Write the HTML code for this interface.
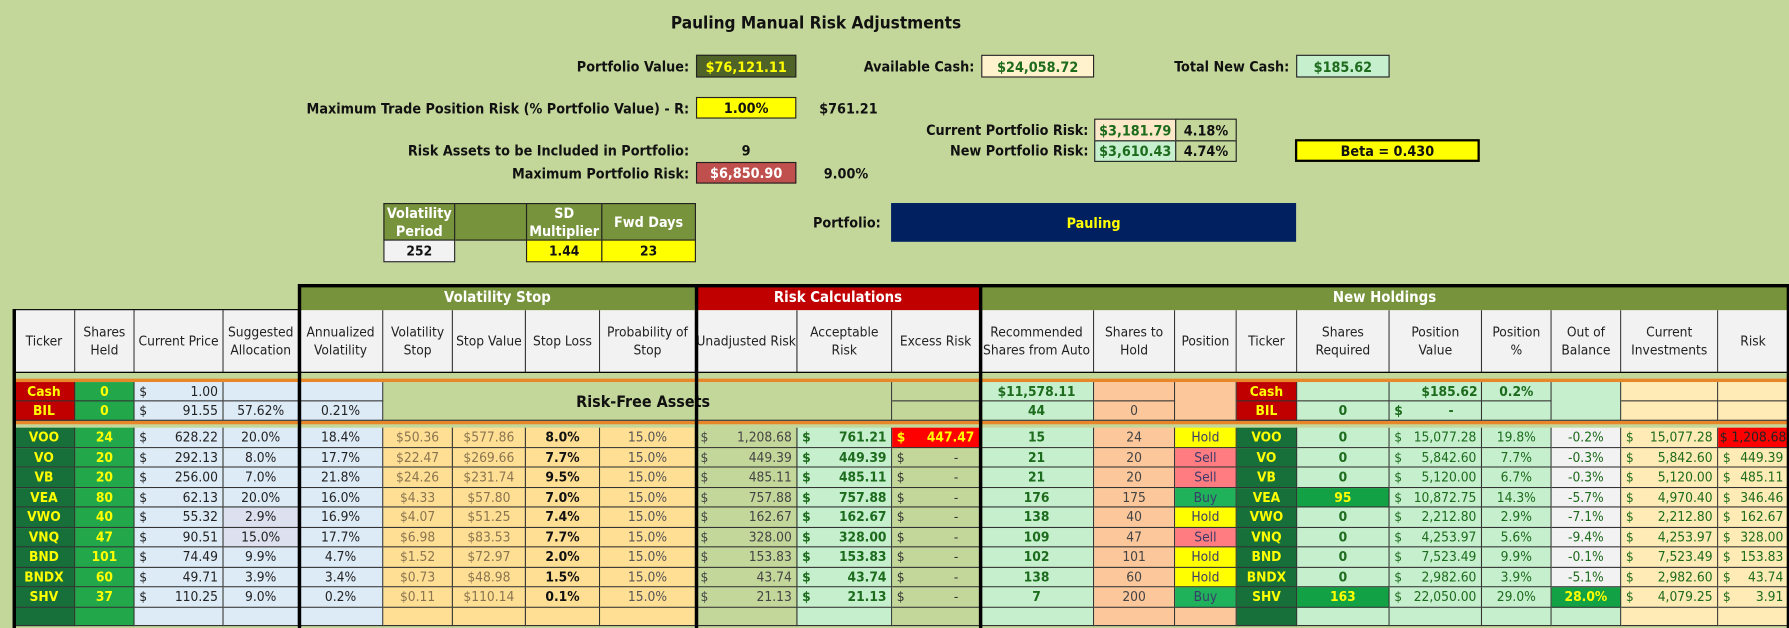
<!DOCTYPE html>
<html><head><meta charset="utf-8"><style>
html,body{margin:0;padding:0;background:#c4d79b;width:1789px;height:625px;overflow:hidden}
#w{position:absolute;left:0;top:0;width:1568px;height:548px;transform:scale(1.14094,1.1405);transform-origin:0 0;font-family:"Liberation Sans Narrow","DejaVu Sans Condensed","Liberation Sans",sans-serif;color:#111}
.a{position:absolute;box-sizing:border-box}
.lb{position:absolute;font-weight:bold;font-size:12.5px;white-space:nowrap;transform:translate(-100%,-50%)}
.tx{position:absolute;font-weight:bold;font-size:12.5px;white-space:nowrap;transform:translateY(-50%)}
.bx{position:absolute;box-sizing:border-box;border:1px solid #222;font-weight:bold;font-size:12.5px;display:flex;align-items:center;justify-content:center}
.r{position:absolute;left:12px;height:17.5px;display:flex;font-size:12px}
.r>span{box-sizing:border-box;height:100%;border-right:1px solid #333;border-bottom:1px solid #333;display:flex;align-items:center;justify-content:center;white-space:nowrap;overflow:hidden}
.r>span.d{justify-content:space-between;padding:0 4px}
.r em{font-style:normal}
.w1{width:54px}.w2{width:52px}.w3{width:78px}.w4{width:66px}.w5{width:74px}.w6{width:61px}.w7{width:64px}.w8{width:65px}.w9{width:84px}.w10{width:89px}.w11{width:83px}.w12{width:77px}.w13{width:100px}.w14{width:71px}.w15{width:54px}.w16{width:53px}.w17{width:81px}.w18{width:81px}.w19{width:61px}.w20{width:61px}.w21{width:85px}.w22{width:62px}
.tk{background:#17703a;color:#ffff00;font-weight:bold}
.rt{background:#c00000;color:#ffff00;font-weight:bold}
.sh{background:#22a84a;color:#ffff00;font-weight:bold}
.bl{background:#ddebf7;color:#222}
.vs{background:#ffdf94;color:#8a7550}
.sl{background:#ffdf94;color:#111;font-weight:bold}
.pr{background:#ffdf94;color:#555}
.un{background:#c4d79b;color:#444}
.ac{background:#c6efce;color:#1d6b1d;font-weight:bold}
.ex{background:#c4d79b;color:#333}
.exr{background:#ff0000;color:#ffff00;font-weight:bold}
.rc{background:#c6efce;color:#1d6b1d;font-weight:bold}
.ph{background:#fcc79b;color:#444}
.ho{background:#ffff00;color:#3b3b6b}
.se{background:#ff7c80;color:#3b3b6b}
.bu{background:#1fb25a;color:#3b3b6b}
.gq{background:#c6efce;color:#1d6b1d;font-weight:bold}
.gb{background:#12a144;color:#ffff00;font-weight:bold}
.pv{background:#c6efce;color:#1d6b1d}
.ob{background:#f2f2f2;color:#1d6b1d}
.ci{background:#ffebb5;color:#1d6b1d}
.rr{background:#ff0000;color:#222}
.hd{position:absolute;top:272px;height:55px;left:12px;display:flex;font-size:12px}
.hd>span{box-sizing:border-box;background:#f2f2f2;border-right:1px solid #333;border-bottom:1px solid #333;display:flex;align-items:center;justify-content:center;text-align:center;line-height:1.35;color:#222}
.v{position:absolute;background:#000}
</style></head><body><div id="w">

<div class="tx" style="left:588px;top:20px;font-size:15px">Pauling Manual Risk Adjustments</div>

<div class="lb" style="left:604px;top:58px">Portfolio Value:</div>
<div class="bx" style="left:610px;top:48px;width:88px;height:20px;background:#4f6228;color:#ffff00">$76,121.11</div>
<div class="lb" style="left:854px;top:58px">Available Cash:</div>
<div class="bx" style="left:860px;top:48px;width:99px;height:20px;background:#fff2cc;color:#1d6b1d">$24,058.72</div>
<div class="lb" style="left:1130px;top:58px">Total New Cash:</div>
<div class="bx" style="left:1136px;top:48px;width:82px;height:20px;background:#c6efce;color:#1d6b1d">$185.62</div>

<div class="lb" style="left:604px;top:95px">Maximum Trade Position Risk (% Portfolio Value) - R:</div>
<div class="bx" style="left:610px;top:85px;width:88px;height:19px;background:#ffff00">1.00%</div>
<div class="tx" style="left:718px;top:95px">$761.21</div>

<div class="lb" style="left:954px;top:114px">Current Portfolio Risk:</div>
<div class="bx" style="left:959px;top:104px;width:72px;height:20px;background:#fde9c9;color:#1d6b1d">$3,181.79</div>
<div class="bx" style="left:1030px;top:104px;width:54px;height:20px;background:#c4d79b">4.18%</div>
<div class="lb" style="left:954px;top:132px">New Portfolio Risk:</div>
<div class="bx" style="left:959px;top:123px;width:72px;height:19px;background:#c6efce;color:#1d6b1d">$3,610.43</div>
<div class="bx" style="left:1030px;top:123px;width:54px;height:19px;background:#c4d79b">4.74%</div>
<div class="bx" style="left:1135px;top:122px;width:162px;height:20px;background:#ffff00;border:2px solid #000">Beta = 0.430</div>

<div class="lb" style="left:604px;top:132px">Risk Assets to be Included in Portfolio:</div>
<div class="tx" style="left:650px;top:132px">9</div>
<div class="lb" style="left:604px;top:152px">Maximum Portfolio Risk:</div>
<div class="bx" style="left:610px;top:142px;width:88px;height:19px;background:#c0504d;color:#fff">$6,850.90</div>
<div class="tx" style="left:722px;top:152px">9.00%</div>

<div class="bx" style="left:336px;top:178px;width:63px;height:33px;background:#77933c;color:#fff;line-height:1.25;text-align:center">Volatility<br>Period</div>
<div class="bx" style="left:398px;top:178px;width:64px;height:33px;background:#77933c"></div>
<div class="bx" style="left:461px;top:178px;width:67px;height:33px;background:#77933c;color:#fff;line-height:1.25;text-align:center">SD<br>Multiplier</div>
<div class="bx" style="left:527px;top:178px;width:83px;height:33px;background:#77933c;color:#fff">Fwd Days</div>
<div class="bx" style="left:336px;top:210px;width:63px;height:20px;background:#f2f2f2;font-size:12px">252</div>
<div class="bx" style="left:461px;top:210px;width:67px;height:20px;background:#ffff00;font-size:12px">1.44</div>
<div class="bx" style="left:527px;top:210px;width:83px;height:20px;background:#ffff00;font-size:12px">23</div>

<div class="lb" style="left:772px;top:195px">Portfolio:</div>
<div class="bx" style="left:781px;top:178px;width:355px;height:34px;background:#002060;color:#ffff00;border:none">Pauling</div>

<div class="a" style="left:262px;top:251px;width:348px;height:21px;background:#77933c;color:#fff;font-weight:bold;font-size:13px;display:flex;align-items:center;justify-content:center">Volatility Stop</div>
<div class="a" style="left:610px;top:251px;width:249px;height:21px;background:#c00000;color:#fff;font-weight:bold;font-size:13px;display:flex;align-items:center;justify-content:center">Risk Calculations</div>
<div class="a" style="left:859px;top:251px;width:709px;height:21px;background:#77933c;color:#fff;font-weight:bold;font-size:13px;display:flex;align-items:center;justify-content:center">New Holdings</div>
<div class="v" style="left:262px;top:249px;width:1306px;height:3px"></div>
<div class="v" style="left:12px;top:271px;width:252px;height:3px"></div>

<div class="hd">
<span class="w1">Ticker</span><span class="w2">Shares<br>Held</span><span class="w3">Current Price</span><span class="w4">Suggested<br>Allocation</span><span class="w5">Annualized<br>Volatility</span><span class="w6">Volatility<br>Stop</span><span class="w7">Stop Value</span><span class="w8">Stop Loss</span><span class="w9">Probability of<br>Stop</span><span class="w10">Unadjusted Risk</span><span class="w11">Acceptable<br>Risk</span><span class="w12">Excess Risk</span><span class="w13">Recommended<br>Shares from Auto</span><span class="w14">Shares to<br>Hold</span><span class="w15">Position</span><span class="w16">Ticker</span><span class="w17">Shares<br>Required</span><span class="w18">Position<br>Value</span><span class="w19">Position<br>%</span><span class="w20">Out of<br>Balance</span><span class="w21">Current<br>Investments</span><span class="w22">Risk</span>
</div>

<div class="a" style="left:12px;top:332px;width:1556px;height:3px;background:#e8862a"></div>
<div class="a" style="left:12px;top:369px;width:1556px;height:3px;background:#e8862a"></div>
<div class="r" style="top:335px;height:17px">
<span class="w1 rt">Cash</span><span class="w2 sh">0</span><span class="w3 bl d"><em>$</em>1.00</span><span class="w4 bl"></span><span class="w5 bl"></span><span style="width:446px;background:#c4d79b;border-bottom:none"></span><span class="w12 ex"></span><span class="w13 rc">$11,578.11</span><span class="w14 ph"></span><span class="w15 ph" style="border-bottom:none"></span><span class="w16 rt">Cash</span><span class="w17 gq"></span><span class="w18 pv" style="justify-content:flex-end;padding-right:3px;font-weight:bold">$185.62</span><span class="w19 pv" style="font-weight:bold">0.2%</span><span class="w20 pv" style="border-bottom:none"></span><span class="w21 ci"></span><span class="w22 ci"></span>
</div>
<div class="r" style="top:352px;height:17px">
<span class="w1 rt">BIL</span><span class="w2 sh">0</span><span class="w3 bl d"><em>$</em>91.55</span><span class="w4 bl">57.62%</span><span class="w5 bl">0.21%</span><span style="width:446px;background:#c4d79b"></span><span class="w12 ex"></span><span class="w13 rc">44</span><span class="w14 ph">0</span><span class="w15 ph"></span><span class="w16 rt">BIL</span><span class="w17 gq">0</span><span class="w18 pv d" style="font-weight:bold"><em>$</em><em style="padding-right:20px">-</em></span><span class="w19 pv"></span><span class="w20 pv"></span><span class="w21 ci"></span><span class="w22 ci"></span>
</div>
<div class="tx" style="left:505px;top:353px;font-size:14px">Risk-Free Assets</div>

<div class="r" style="top:375px"><span class="w1 tk">VOO</span><span class="w2 sh">24</span><span class="w3 bl d"><em>$</em>628.22</span><span class="w4 bl">20.0%</span><span class="w5 bl">18.4%</span><span class="w6 vs">$50.36</span><span class="w7 vs">$577.86</span><span class="w8 sl">8.0%</span><span class="w9 pr">15.0%</span><span class="w10 un d"><em>$</em>1,208.68</span><span class="w11 ac d"><em>$</em>761.21</span><span class="w12 exr d"><em>$</em>447.47</span><span class="w13 rc">15</span><span class="w14 ph">24</span><span class="w15 ho">Hold</span><span class="w16 tk">VOO</span><span class="w17 gq">0</span><span class="w18 pv d"><em>$</em>15,077.28</span><span class="w19 pv">19.8%</span><span class="w20 ob">-0.2%</span><span class="w21 ci d"><em>$</em>15,077.28</span><span class="w22 rr">$ 1,208.68</span></div>
<div class="r" style="top:392.5px"><span class="w1 tk">VO</span><span class="w2 sh">20</span><span class="w3 bl d"><em>$</em>292.13</span><span class="w4 bl">8.0%</span><span class="w5 bl">17.7%</span><span class="w6 vs">$22.47</span><span class="w7 vs">$269.66</span><span class="w8 sl">7.7%</span><span class="w9 pr">15.0%</span><span class="w10 un d"><em>$</em>449.39</span><span class="w11 ac d"><em>$</em>449.39</span><span class="w12 ex d"><em>$</em><em style="padding-right:14px">-</em></span><span class="w13 rc">21</span><span class="w14 ph">20</span><span class="w15 se">Sell</span><span class="w16 tk">VO</span><span class="w17 gq">0</span><span class="w18 pv d"><em>$</em>5,842.60</span><span class="w19 pv">7.7%</span><span class="w20 ob">-0.3%</span><span class="w21 ci d"><em>$</em>5,842.60</span><span class="w22 ci d"><em>$</em>449.39</span></div>
<div class="r" style="top:410px"><span class="w1 tk">VB</span><span class="w2 sh">20</span><span class="w3 bl d"><em>$</em>256.00</span><span class="w4 bl">7.0%</span><span class="w5 bl">21.8%</span><span class="w6 vs">$24.26</span><span class="w7 vs">$231.74</span><span class="w8 sl">9.5%</span><span class="w9 pr">15.0%</span><span class="w10 un d"><em>$</em>485.11</span><span class="w11 ac d"><em>$</em>485.11</span><span class="w12 ex d"><em>$</em><em style="padding-right:14px">-</em></span><span class="w13 rc">21</span><span class="w14 ph">20</span><span class="w15 se">Sell</span><span class="w16 tk">VB</span><span class="w17 gq">0</span><span class="w18 pv d"><em>$</em>5,120.00</span><span class="w19 pv">6.7%</span><span class="w20 ob">-0.3%</span><span class="w21 ci d"><em>$</em>5,120.00</span><span class="w22 ci d"><em>$</em>485.11</span></div>
<div class="r" style="top:427.5px"><span class="w1 tk">VEA</span><span class="w2 sh">80</span><span class="w3 bl d"><em>$</em>62.13</span><span class="w4 bl">20.0%</span><span class="w5 bl">16.0%</span><span class="w6 vs">$4.33</span><span class="w7 vs">$57.80</span><span class="w8 sl">7.0%</span><span class="w9 pr">15.0%</span><span class="w10 un d"><em>$</em>757.88</span><span class="w11 ac d"><em>$</em>757.88</span><span class="w12 ex d"><em>$</em><em style="padding-right:14px">-</em></span><span class="w13 rc">176</span><span class="w14 ph">175</span><span class="w15 bu">Buy</span><span class="w16 tk">VEA</span><span class="w17 gb">95</span><span class="w18 pv d"><em>$</em>10,872.75</span><span class="w19 pv">14.3%</span><span class="w20 ob">-5.7%</span><span class="w21 ci d"><em>$</em>4,970.40</span><span class="w22 ci d"><em>$</em>346.46</span></div>
<div class="r" style="top:445px"><span class="w1 tk">VWO</span><span class="w2 sh">40</span><span class="w3 bl d"><em>$</em>55.32</span><span class="w4 bl" style="background:#dce0ef">2.9%</span><span class="w5 bl">16.9%</span><span class="w6 vs">$4.07</span><span class="w7 vs">$51.25</span><span class="w8 sl">7.4%</span><span class="w9 pr">15.0%</span><span class="w10 un d"><em>$</em>162.67</span><span class="w11 ac d"><em>$</em>162.67</span><span class="w12 ex d"><em>$</em><em style="padding-right:14px">-</em></span><span class="w13 rc">138</span><span class="w14 ph">40</span><span class="w15 ho">Hold</span><span class="w16 tk">VWO</span><span class="w17 gq">0</span><span class="w18 pv d"><em>$</em>2,212.80</span><span class="w19 pv">2.9%</span><span class="w20 ob">-7.1%</span><span class="w21 ci d"><em>$</em>2,212.80</span><span class="w22 ci d"><em>$</em>162.67</span></div>
<div class="r" style="top:462.5px"><span class="w1 tk">VNQ</span><span class="w2 sh">47</span><span class="w3 bl d"><em>$</em>90.51</span><span class="w4 bl" style="background:#dce0ef">15.0%</span><span class="w5 bl">17.7%</span><span class="w6 vs">$6.98</span><span class="w7 vs">$83.53</span><span class="w8 sl">7.7%</span><span class="w9 pr">15.0%</span><span class="w10 un d"><em>$</em>328.00</span><span class="w11 ac d"><em>$</em>328.00</span><span class="w12 ex d"><em>$</em><em style="padding-right:14px">-</em></span><span class="w13 rc">109</span><span class="w14 ph">47</span><span class="w15 se">Sell</span><span class="w16 tk">VNQ</span><span class="w17 gq">0</span><span class="w18 pv d"><em>$</em>4,253.97</span><span class="w19 pv">5.6%</span><span class="w20 ob">-9.4%</span><span class="w21 ci d"><em>$</em>4,253.97</span><span class="w22 ci d"><em>$</em>328.00</span></div>
<div class="r" style="top:480px"><span class="w1 tk">BND</span><span class="w2 sh">101</span><span class="w3 bl d"><em>$</em>74.49</span><span class="w4 bl">9.9%</span><span class="w5 bl">4.7%</span><span class="w6 vs">$1.52</span><span class="w7 vs">$72.97</span><span class="w8 sl">2.0%</span><span class="w9 pr">15.0%</span><span class="w10 un d"><em>$</em>153.83</span><span class="w11 ac d"><em>$</em>153.83</span><span class="w12 ex d"><em>$</em><em style="padding-right:14px">-</em></span><span class="w13 rc">102</span><span class="w14 ph">101</span><span class="w15 ho">Hold</span><span class="w16 tk">BND</span><span class="w17 gq">0</span><span class="w18 pv d"><em>$</em>7,523.49</span><span class="w19 pv">9.9%</span><span class="w20 ob">-0.1%</span><span class="w21 ci d"><em>$</em>7,523.49</span><span class="w22 ci d"><em>$</em>153.83</span></div>
<div class="r" style="top:497.5px"><span class="w1 tk">BNDX</span><span class="w2 sh">60</span><span class="w3 bl d"><em>$</em>49.71</span><span class="w4 bl">3.9%</span><span class="w5 bl">3.4%</span><span class="w6 vs">$0.73</span><span class="w7 vs">$48.98</span><span class="w8 sl">1.5%</span><span class="w9 pr">15.0%</span><span class="w10 un d"><em>$</em>43.74</span><span class="w11 ac d"><em>$</em>43.74</span><span class="w12 ex d"><em>$</em><em style="padding-right:14px">-</em></span><span class="w13 rc">138</span><span class="w14 ph">60</span><span class="w15 ho">Hold</span><span class="w16 tk">BNDX</span><span class="w17 gq">0</span><span class="w18 pv d"><em>$</em>2,982.60</span><span class="w19 pv">3.9%</span><span class="w20 ob">-5.1%</span><span class="w21 ci d"><em>$</em>2,982.60</span><span class="w22 ci d"><em>$</em>43.74</span></div>
<div class="r" style="top:515px"><span class="w1 tk">SHV</span><span class="w2 sh">37</span><span class="w3 bl d"><em>$</em>110.25</span><span class="w4 bl">9.0%</span><span class="w5 bl">0.2%</span><span class="w6 vs">$0.11</span><span class="w7 vs">$110.14</span><span class="w8 sl">0.1%</span><span class="w9 pr">15.0%</span><span class="w10 un d"><em>$</em>21.13</span><span class="w11 ac d"><em>$</em>21.13</span><span class="w12 ex d"><em>$</em><em style="padding-right:14px">-</em></span><span class="w13 rc">7</span><span class="w14 ph">200</span><span class="w15 bu">Buy</span><span class="w16 tk">SHV</span><span class="w17 gb">163</span><span class="w18 pv d"><em>$</em>22,050.00</span><span class="w19 pv">29.0%</span><span class="w20 gb">28.0%</span><span class="w21 ci d"><em>$</em>4,079.25</span><span class="w22 ci d"><em>$</em>3.91</span></div>
<div class="r" style="top:532.5px;height:16px"><span class="w1 tk"></span><span class="w2 sh"></span><span class="w3 bl"></span><span class="w4 bl"></span><span class="w5 bl"></span><span class="w6 vs"></span><span class="w7 vs"></span><span class="w8 sl"></span><span class="w9 pr"></span><span class="w10 un"></span><span class="w11 ac"></span><span class="w12 ex"></span><span class="w13 rc"></span><span class="w14 ph"></span><span class="w15 ph"></span><span class="w16 tk"></span><span class="w17 gq"></span><span class="w18 pv"></span><span class="w19 pv"></span><span class="w20 pv"></span><span class="w21 ci"></span><span class="w22 ci"></span></div>

<div class="v" style="left:11px;top:271px;width:3px;height:280px"></div>
<div class="v" style="left:261px;top:249px;width:3px;height:302px"></div>
<div class="v" style="left:609px;top:249px;width:3px;height:302px"></div>
<div class="v" style="left:858px;top:249px;width:3px;height:302px"></div>
<div class="v" style="left:1566px;top:249px;width:2px;height:302px"></div>
<div class="v" style="left:12px;top:326px;width:1556px;height:1px"></div>
</div></body></html>
